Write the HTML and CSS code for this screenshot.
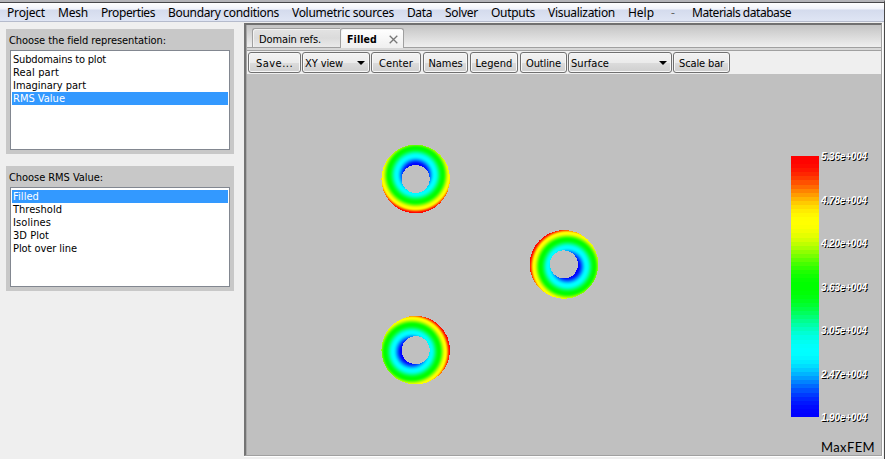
FILE: index.html
```html
<!DOCTYPE html>
<html lang="en">
<head>
<meta charset="utf-8">
<title>MaxFEM</title>
<link rel="stylesheet" href="styles.css">
</head>
<body>
<div class="window">
  <nav class="menubar">
    <span data-w="37">Project</span><span data-w="29">Mesh</span><span data-w="53">Properties</span><span data-w="110">Boundary conditions</span><span data-w="101">Volumetric sources</span><span data-w="24">Data</span><span data-w="32">Solver</span><span data-w="43">Outputs</span><span data-w="66">Visualization</span><span data-w="25">Help</span><span class="dash">-</span><span data-w="98">Materials database</span>
  </nav>
  <div class="workspace">
    <aside class="sidebar">
      <section class="group">
        <h2><span data-w="156">Choose the field representation:</span></h2>
        <ul>
          <li><span data-w="92">Subdomains to plot</span></li>
          <li><span data-w="45">Real part</span></li>
          <li><span data-w="72">Imaginary part</span></li>
          <li class="selected"><span data-w="51">RMS Value</span></li>
        </ul>
      </section>
      <section class="group">
        <h2><span data-w="93">Choose RMS Value:</span></h2>
        <ul>
          <li class="selected"><span data-w="25">Filled</span></li>
          <li><span data-w="48">Threshold</span></li>
          <li><span data-w="37">Isolines</span></li>
          <li><span data-w="35">3D Plot</span></li>
          <li><span data-w="63">Plot over line</span></li>
        </ul>
      </section>
    </aside>
    <main class="viewer">
      <div class="tabs">
        <div class="tab"><span data-w="61">Domain refs.</span></div>
        <div class="tab active"><span data-w="29">Filled</span>
          <svg width="9" height="9" viewBox="0 0 9 9"><path d="M.7.7 8.3 8.3M8.3.7.7 8.3" stroke="#777" stroke-width="1.3"/></svg>
        </div>
      </div>
      <div class="toolbar">
        <button class="save"><span data-w="36">Save...</span></button>
        <button class="view"><span data-w="37">XY view</span><i></i></button>
        <button class="center"><span data-w="33">Center</span></button>
        <button class="names"><span data-w="33">Names</span></button>
        <button class="legend"><span data-w="36">Legend</span></button>
        <button class="outline"><span data-w="34">Outline</span></button>
        <button class="surface"><span data-w="37">Surface</span><i></i></button>
        <button class="scale"><span data-w="44">Scale bar</span></button>
      </div>
      <div class="scene">
        <svg class="rings" width="360" height="381" viewBox="247 74 360 381" shape-rendering="crispEdges">
          <defs>
            <radialGradient id="field" gradientUnits="userSpaceOnUse" cx="0" cy="-4" r="38"></radialGradient>
            <path id="ring" fill="url(#field)" fill-rule="evenodd" d="M-34.3 0a34.3 34.3 0 1 0 68.6 0a34.3 34.3 0 1 0-68.6 0zM-14 0a14 14 0 1 0 28 0a14 14 0 1 0-28 0z"/>
          </defs>
          <use href="#ring" transform="translate(415.7 179)"/>
          <use href="#ring" transform="translate(564 264.4) rotate(122)"/>
          <use href="#ring" transform="translate(415.7 350.2) rotate(-112)"/>
        </svg>
        <div class="legend-area">
          <div class="scalebar">
            <svg id="bar" width="28" height="261" shape-rendering="crispEdges"></svg>
            <div class="ticks">
              <span data-w="45">5.36e+004</span><span data-w="45">4.78e+004</span><span data-w="45">4.20e+004</span><span data-w="45">3.63e+004</span><span data-w="45">3.05e+004</span><span data-w="45">2.47e+004</span><span data-w="45">1.90e+004</span>
            </div>
          </div>
          <div class="brand"><span data-w="53">MaxFEM</span></div>
        </div>
      </div>
    </main>
  </div>
</div>
<script src="app.js"></script>
</body>
</html>
```
FILE: styles.css
```css
* { box-sizing: border-box; }
body { margin: 0; background: #efefef; color: #000; overflow: hidden; }
span { display: inline-block; white-space: nowrap; }
.window {
  width: 885px; height: 459px; display: flex; flex-direction: column;
  border-top: 2px solid #b4b4b8; border-right: 1px solid #484848;
}
.menubar {
  flex: none; height: 20px; display: flex; gap: 13px; padding-left: 7px;
  border-top: 1px solid #47474a; border-bottom: 1px solid #b5bbcc;
  background: linear-gradient(#fff 0, #f1f3fa 6px, #d4dbed 7px, #dfe5f4 18px);
  font: 12px/20px "Noto Sans", sans-serif;
}
.menubar .dash { width: 12px; text-align: center; color: #666; }
.workspace { flex: 1; display: flex; min-height: 0; }
.sidebar { width: 244px; padding: 7px 0 0 6px; display: flex; flex-direction: column; gap: 12px; }
.group {
  width: 228px; height: 125px; background: #c8c8c8; padding: 3px 4px 4px;
  font: 11px/13px "DejaVu Sans Condensed", "DejaVu Sans", sans-serif;
}
.group h2 { margin: 0 0 0 -1px; height: 18px; font: inherit; line-height: 17px; }
.group ul {
  margin: 0; padding: 2px 1px; height: 100px; list-style: none;
  border: 1px solid #828790; background: #fff;
}
.group li { height: 13px; padding-left: 1px; line-height: 13px; }
.group li span { vertical-align: top; }
.group .selected { background: #3399ff; color: #fff; }
.viewer {
  width: 638px; height: 433px; margin-top: 1px; display: flex; flex-direction: column;
  border: solid; border-width: 2px 1px 1px 2px;
  border-color: #707070 #a0a0a0 #a0a0a0 #747474;
  padding-left: 1px; background: #a8a8a8;
  box-shadow: 0 1px #fff, 1px 0 #fff;
}
.tabs {
  flex: none; height: 23px; display: flex; align-items: flex-end; padding-left: 5px;
  background: linear-gradient(#c4c4c4, #efefef); border-bottom: 1px solid #a0a0a0;
  font: 11px/21px "DejaVu Sans Condensed", sans-serif;
}
.tab {
  height: 19px; width: 88px; padding-left: 6px;
  border: 1px solid #a0a0a0; border-right: 0; border-bottom: 0; border-radius: 3px 0 0;
  background: linear-gradient(#e3e3e3, #dbdbdb 50%, #eaeaea);
  box-shadow: inset 1px 1px #f3f3f3;
}
.tab.active {
  width: 64px; height: 20px; margin-bottom: -1px; border-right: 1px solid #a0a0a0; border-radius: 3px 3px 0 0;
  background: linear-gradient(#fff, #efefef); display: flex; justify-content: space-between;
  align-items: center; padding: 1px 5px 0 6px; font-weight: bold; font-size: 10.5px;
}
.toolbar {
  flex: none; height: 26px; display: flex; gap: 1px;
  border-top: 2px solid #d8d8d8; padding: 2px 0 0 1px; background: #efefef;
  box-shadow: inset 0 1px #a0a0a0;
}
button {
  height: 21px; padding: 0; border: 1px solid #707070; border-radius: 3px;
  display: flex; align-items: center; justify-content: center;
  background: linear-gradient(#f2f2f2, #ebebeb 50%, #dcdcdc 51%, #cfcfcf);
  box-shadow: inset 0 0 0 1px #f7f7f7;
  font: 11px/19px "DejaVu Sans Condensed", sans-serif; color: #000;
}
.save { width: 53px; } .view { width: 68px; } .center { width: 50px; }
.names { width: 45px; margin-left: 1px; } .legend { width: 48px; margin-left: 1px; }
.outline { width: 47px; margin-left: 1px; } .surface { width: 104px; } .scale { width: 57px; }
.view, .surface { justify-content: space-between; padding: 0 4px 0 2px; }
i { border: solid transparent; border-width: 4px 4px 0; border-top-color: #000; }
button span { padding-top: 1px; }
.scene { flex: 1; min-height: 0; display: flex; background: #c0c0c0; }
.rings { flex: none; display: block; }
.legend-area { flex: 1; display: flex; flex-direction: column; align-items: flex-end; justify-content: space-between; padding: 82px 6px 0 0; }
.scalebar { display: flex; width: 84px; gap: 3px; }
.scalebar svg { flex: none; }
.ticks {
  height: 275px; margin-top: -6px; display: flex; flex-direction: column; justify-content: space-between;
  font: italic bold 10px/14px "Liberation Sans", sans-serif; color: #fff; text-shadow: 1px 1px #000;
}
.ticks span { margin-left: -1px; }
.brand { font: 13px/16px Lato, sans-serif; }
```
FILE: app.js
```js
// Colour scale, from high to low, with eased transitions between the main hues
const hues = [[255, 0, 0], [255, 255, 0], [0, 255, 0], [0, 255, 255], [0, 0, 255]];
function colour(t) {
  const p = Math.min(Math.max(t, 0), 0.9999) * 4;
  const k = Math.floor(p);
  const e = (1 - Math.cos((p - k) * Math.PI)) / 2;
  return 'rgb(' + hues[k].map((c, i) => Math.round(c + (hues[k + 1][i] - c) * e)).join(',') + ')';
}
const ns = 'http://www.w3.org/2000/svg';
function add(parent, tag, attrs) {
  const el = document.createElementNS(ns, tag);
  for (const name in attrs) el.setAttribute(name, attrs[name]);
  parent.appendChild(el);
}
const bar = document.getElementById('bar');
for (let i = 0; i < 64; i++) {
  add(bar, 'rect', { x: 0, y: i * 261 / 64, width: 28, height: 261 / 64 + 0.5, fill: colour(i / 63) });
}
// Radii at which the field passes through blue, cyan, green, yellow and red
const radii = [10.5, 19, 27, 33.5, 38];
const field = document.getElementById('field');
for (let i = 0; i <= 48; i++) {
  const k = Math.min(Math.floor(i / 12), 3);
  const r = radii[k] + (radii[k + 1] - radii[k]) * (i / 12 - k);
  add(field, 'stop', { offset: r / 38, 'stop-color': colour(1 - i / 48) });
}
// Spread each label over its design width
document.querySelectorAll('[data-w]').forEach(el => {
  const natural = el.getBoundingClientRect().width;
  const target = Number(el.dataset.w) + 1;
  el.style.letterSpacing = (target - natural) / el.textContent.length + 'px';
});
```
